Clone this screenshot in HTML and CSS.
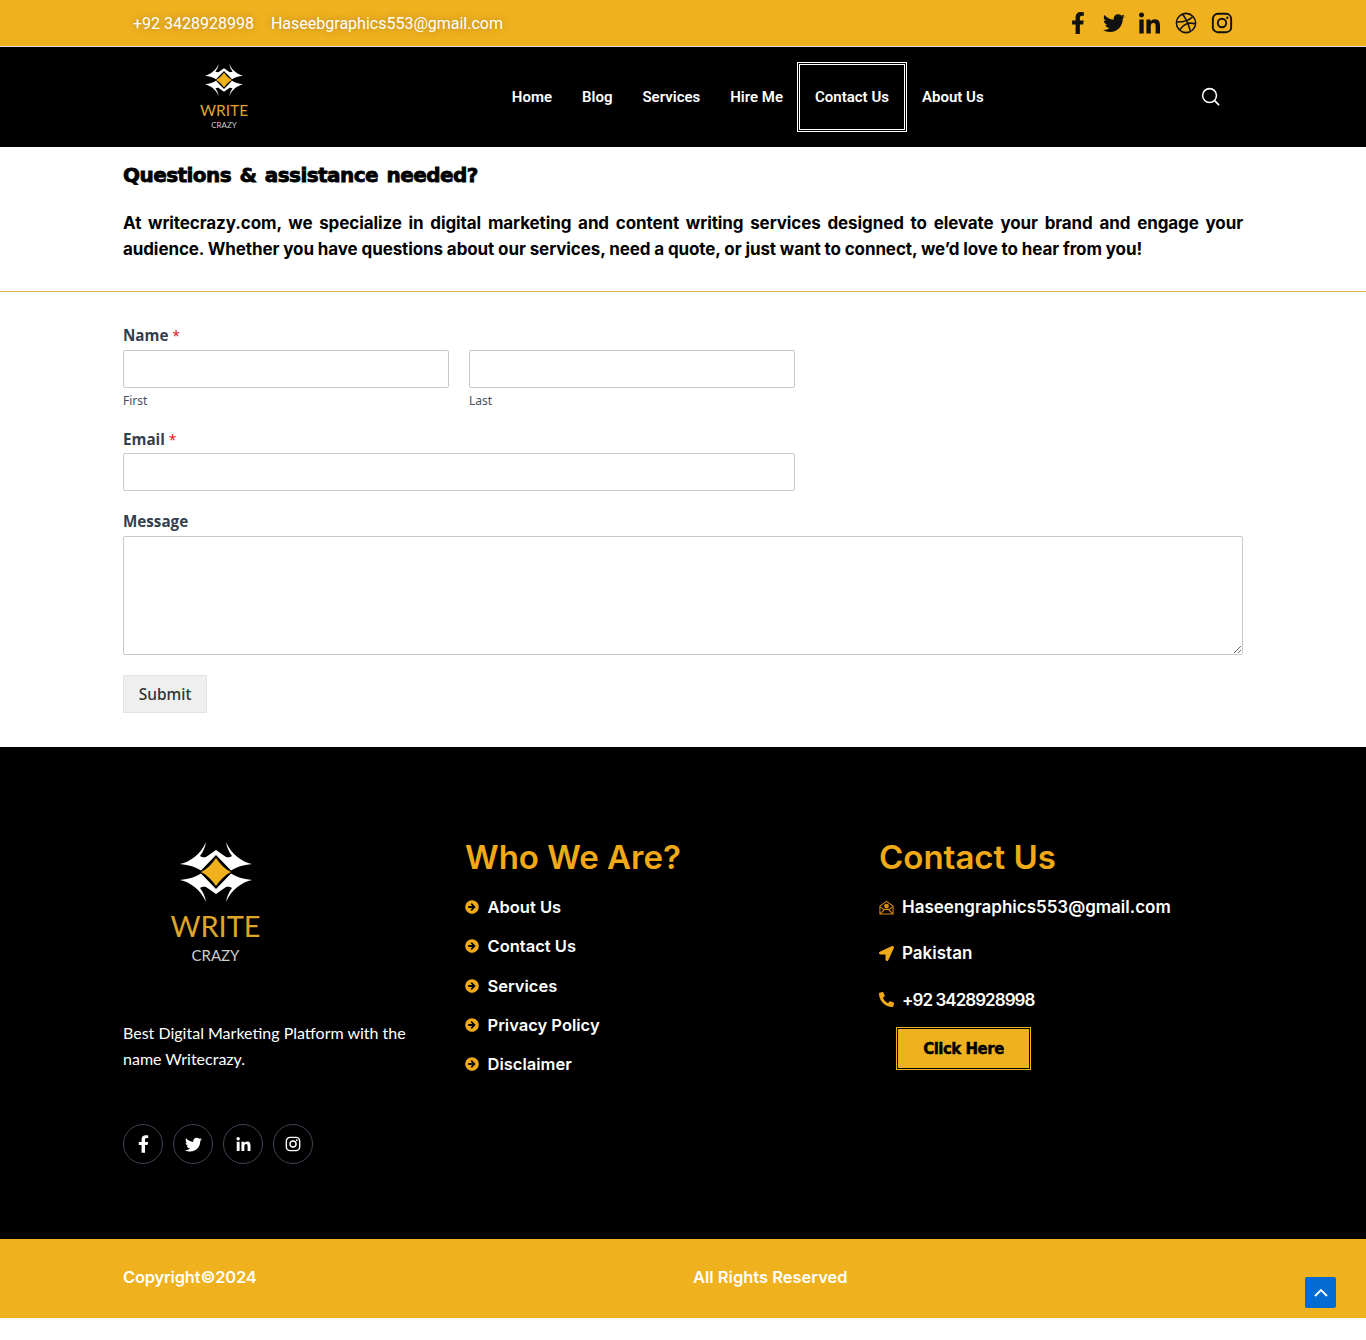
FILE: index.html
```html
<!DOCTYPE html>
<html lang="en">
<head>
<meta charset="utf-8">
<title>Contact Us – Write Crazy</title>
<link rel="stylesheet" href="styles.css">
</head>
<body>
<svg class="defs" width="0" height="0" aria-hidden="true">
  <symbol id="mark" viewBox="0 0 74 60">
    <path id="band" fill="#fff" d="M1 22C11 20 22 12 27 0C26 6 24 10 21 14C23 15.5 25 15.5 27 15L37 8L47 15C49 15.5 51 15.5 53 14C50 10 48 6 47 0C52 12 63 20 73 22C64 23 57 25 52 28.5L37 13L22 28.5C17 25 10 23 1 22Z"/>
    <g transform="translate(0 60) scale(1 -1)"><path fill="#fff" d="M1 22C11 20 22 12 27 0C26 6 24 10 21 14C23 15.5 25 15.5 27 15L37 8L47 15C49 15.5 51 15.5 53 14C50 10 48 6 47 0C52 12 63 20 73 22C64 23 57 25 52 28.5L37 13L22 28.5C17 25 10 23 1 22Z"/></g>
    <path fill="#f0b11d" d="M37 16C41 22 46 27 52 30C46 33 41 38 37 44C33 38 28 33 22 30C28 27 33 22 37 16Z"/>
  </symbol>
  <symbol id="i-f" viewBox="0 0 320 512"><path fill="currentColor" d="M279 288l14-93h-89v-60c0-25 12-50 52-50h41V6s-37-6-72-6c-73 0-121 44-121 125v70H23v93h81v224h100V288z"/></symbol>
  <symbol id="i-t" viewBox="0 0 512 512"><path fill="currentColor" d="M459 152c0 5 0 9 0 14 0 139-106 299-299 299-59 0-115-17-161-47 8 1 16 1 25 1 49 0 94-17 130-45-46-1-85-31-98-72 6 1 13 2 20 2 9 0 19-1 27-4-48-10-84-52-84-103v-1c14 8 30 13 47 13-28-19-47-51-47-87 0-20 5-37 14-53 52 64 129 105 216 110-2-8-3-16-3-24 0-58 47-105 105-105 30 0 58 13 77 33 24-5 47-14 67-26-8 25-25 45-46 58 21-2 41-8 60-16-14 21-32 39-52 53z"/></symbol>
  <symbol id="i-in" viewBox="0 0 448 512"><path fill="currentColor" d="M100 480H7V181h93zM53 140C24 140 0 116 0 87a53 53 0 0 1 107 0c0 29-24 53-54 53zm395 340h-93V334c0-35-1-79-48-79-48 0-56 38-56 77v148h-93V181h89v41h1c12-24 43-48 88-48 94 0 112 62 112 142z"/></symbol>
  <symbol id="i-ig" viewBox="0 0 24 24"><g fill="none" stroke="currentColor" stroke-width="2.1"><rect x="2" y="2" width="20" height="20" rx="5.5"/><circle cx="12" cy="12" r="4.6"/></g><circle cx="17.8" cy="6.2" r="1.3" fill="currentColor"/></symbol>
  <symbol id="i-dr" viewBox="0 0 24 24"><g fill="none" stroke="currentColor" stroke-width="1.7"><circle cx="12" cy="12" r="10.5"/><path d="M8.56 2.75c4.37 6.03 6.02 9.42 8.03 17.72m2.54-15.38c-3.72 4.35-8.94 5.66-16.88 5.85m19.5 1.9c-3.5-.93-6.63-.82-8.94 0-2.58.92-5.01 2.86-7.44 6.32"/></g></symbol>
  <symbol id="i-arrow" viewBox="0 0 512 512"><path fill="#f0a917" d="M256 8c137 0 248 111 248 248S393 504 256 504 8 393 8 256 119 8 256 8z"/><path fill="#000" d="M235 121l-23 23a15 15 0 0 0 0 21l58 55H130a15 15 0 0 0-15 15v42a15 15 0 0 0 15 15h140l-58 55a15 15 0 0 0 0 21l23 23a15 15 0 0 0 21 0l124-124a15 15 0 0 0 0-21L256 121a15 15 0 0 0-21 0z"/></symbol>
</svg>

<div class="topbar">
  <div class="topbar-info">
    <span>+92 3428928998</span>
    <span>Haseebgraphics553@gmail.com</span>
  </div>
  <div class="topbar-social">
    <svg class="ts ts-f"><use href="#i-f"/></svg>
    <svg class="ts ts-t"><use href="#i-t"/></svg>
    <svg class="ts ts-in"><use href="#i-in"/></svg>
    <svg class="ts ts-dr"><use href="#i-dr"/></svg>
    <svg class="ts ts-ig"><use href="#i-ig"/></svg>
  </div>
</div>

<header class="header">
  <div class="logo logo-small">
    <svg class="logo-mark"><use href="#mark"/></svg>
    <div class="logo-write">WRITE</div>
    <div class="logo-crazy">CRAZY</div>
  </div>
  <nav class="nav">
    <a href="#">Home</a>
    <a href="#">Blog</a>
    <a href="#">Services</a>
    <a href="#">Hire Me</a>
    <a href="#" class="current">Contact Us</a>
    <a href="#">About Us</a>
  </nav>
  <svg class="search" viewBox="0 0 20 20"><circle cx="9" cy="9" r="7.3" fill="none" stroke="currentColor" stroke-width="1.6"/><path d="M14.3 14.3L18.5 18.5" stroke="currentColor" stroke-width="1.8" stroke-linecap="round"/></svg>
</header>

<section class="intro">
  <h1>Questions &amp; assistance needed?</h1>
  <p>At writecrazy.com, we specialize in digital marketing and content writing services designed to elevate your brand and engage your audience. Whether you have questions about our services, need a quote, or just want to connect, we’d love to hear from you!</p>
</section>

<hr class="divider">

<form class="form">
  <div class="field">
    <label class="lbl">Name <em>*</em></label>
    <div class="name-row">
      <div class="name-col"><input type="text"><small>First</small></div>
      <div class="name-col"><input type="text"><small>Last</small></div>
    </div>
  </div>
  <div class="field field-email">
    <label class="lbl">Email <em>*</em></label>
    <input type="email" class="short">
  </div>
  <div class="field field-msg">
    <label class="lbl">Message</label>
    <textarea></textarea>
  </div>
  <button type="button" class="submit">Submit</button>
</form>

<footer class="footer">
  <div class="col col-about">
    <div class="logo logo-large">
      <svg class="logo-mark"><use href="#mark"/></svg>
      <div class="logo-write">WRITE</div>
      <div class="logo-crazy">CRAZY</div>
    </div>
    <p class="blurb">Best Digital Marketing Platform with the name Writecrazy.</p>
    <div class="circles">
      <a href="#"><svg class="ci-f"><use href="#i-f"/></svg></a>
      <a href="#"><svg class="ci-t"><use href="#i-t"/></svg></a>
      <a href="#"><svg class="ci-in"><use href="#i-in"/></svg></a>
      <a href="#"><svg class="ci-ig"><use href="#i-ig"/></svg></a>
    </div>
  </div>
  <div class="col col-links">
    <h2>Who We Are?</h2>
    <ul class="links">
      <li><svg><use href="#i-arrow"/></svg>About Us</li>
      <li><svg><use href="#i-arrow"/></svg>Contact Us</li>
      <li><svg><use href="#i-arrow"/></svg>Services</li>
      <li><svg><use href="#i-arrow"/></svg>Privacy Policy</li>
      <li><svg><use href="#i-arrow"/></svg>Disclaimer</li>
    </ul>
  </div>
  <div class="col col-contact">
    <h2>Contact Us</h2>
    <ul class="contacts">
      <li>
        <svg viewBox="0 0 16 16"><g fill="none" stroke="#d98a10" stroke-width="1.1"><path d="M1 6.5L8 1.5L15 6.5V15H1Z"/><path d="M1 15L6 10H10L15 15M1 7L5.5 10.5M15 7L10.5 10.5"/></g><circle cx="8" cy="6.5" r="2.6" fill="#d98a10"/></svg>
        <span>Haseengraphics553@gmail.com</span>
      </li>
      <li>
        <svg viewBox="0 0 512 512"><path fill="#f0a917" d="M444 3L28 195c-48 22-32 93 19 93h176v176c0 51 71 67 93 19L508 67c16-38-26-80-64-64z"/></svg>
        <span>Pakistan</span>
      </li>
      <li>
        <svg viewBox="0 0 512 512"><path fill="#f0a917" d="M497 361l-112-48a24 24 0 0 0-28 7l-50 60A371 371 0 0 1 130 204l60-50a24 24 0 0 0 7-28L149 14a24 24 0 0 0-27-14L18 24A24 24 0 0 0 0 48c0 256 208 464 464 464a24 24 0 0 0 23-19l24-104a24 24 0 0 0-14-28z"/></svg>
        <span class="phone">+92 3428928998</span>
      </li>
    </ul>
    <a href="#" class="cta">Click Here</a>
  </div>
</footer>

<div class="copyright">
  <span class="copy-left">Copyright©2024</span>
  <span class="copy-right">All Rights Reserved</span>
  <a href="#" class="totop"><svg viewBox="0 0 16 16"><path d="M2 11L8 5L14 11" fill="none" stroke="#fff" stroke-width="1.8"/></svg></a>
</div>
</body>
</html>
```
FILE: styles.css
```css
* { box-sizing: border-box; }
html, body { margin: 0; padding: 0; }
body { background: #fff; font-family: "Inter", sans-serif; height: 1340px; overflow: hidden; }
.defs { position: absolute; }
a { text-decoration: none; color: inherit; }

.topbar { height: 47px; background: #efb11e; border-bottom: 1px solid #ddd; display: flex; justify-content: space-between; align-items: center; padding: 0 133px; }
.topbar-info { display: flex; gap: 17px; padding-top: 2px; font: 400 16px/20px "Roboto", sans-serif; color: #fff; text-shadow: 0 0 6px rgba(120,90,40,.55); }
.topbar-social { display: flex; align-items: center; color: #111; }
.ts { display: block; height: 22px; }
.ts-f { width: 14px; margin-right: 18px; }
.ts-t { width: 22px; margin-right: 14px; }
.ts-in { width: 21px; height: 24px; margin-right: 15px; }
.ts-dr { width: 22px; margin-right: 14px; }
.ts-ig { width: 22px; }

.header { height: 100px; background: #000; display: flex; align-items: center; position: relative; padding-left: 496.8px; }
.logo { position: absolute; display: flex; flex-direction: column; align-items: center; }
.logo-small { left: 174px; top: 17px; width: 100px; }
.logo-small .logo-mark { width: 40px; height: 32px; display: block; }
.logo-write { font-family: "Lato", sans-serif; font-weight: 400; color: #dfa528; }
.logo-crazy { font-family: "Lato", sans-serif; font-weight: 400; color: #ccc; }
.logo-small .logo-write { font-size: 15.5px; line-height: 18px; margin-top: 5px; }
.logo-small .logo-crazy { font-size: 8px; line-height: 10px; margin-top: 1px; }
.nav { display: flex; align-items: center; font: 600 15px/20px "Roboto", sans-serif; color: #fff; }
.nav a { padding: 0 15px; }
.nav a.current { padding: 22px 15px; border: 3px double #fff; margin: 0 0 0 -1px; }
.search { position: absolute; left: 1201px; top: 40px; width: 19px; height: 19px; color: #fff; }

.intro { padding: 15px 123px 0; }
.intro h1 { margin: 0; font: 700 20px/26px "DejaVu Sans", sans-serif; color: #000; -webkit-text-stroke: .8px #000; letter-spacing: -.55px; word-spacing: 2px; }
.intro p { margin: 22px 0 0; font: 700 17px/26px "Inter", sans-serif; color: #000; text-align: justify; letter-spacing: -.1px; }

.divider { margin: 29px 0 0; border: 0; border-top: 1px solid #e5b648; height: 0; }

.form { padding: 33px 123px 0; height: 455px; }
.lbl { display: block; font: 700 15.2px/20px "Open Sans", sans-serif; color: #333f4d; margin-bottom: 4px; }
.lbl em { color: #d11; font-style: normal; font-weight: 400; font-size: 14px; }
input, textarea { display: block; border: 1px solid #c8c8c8; border-radius: 2px; background: #fff; width: 100%; }
input { height: 38px; }
.name-row { display: flex; gap: 20px; width: 672px; }
.name-col { flex: 1; }
.name-col small { display: block; font: 400 12px/16px "Noto Sans", sans-serif; color: #47505c; margin-top: 5px; }
.field-email { margin-top: 20px; }
.field-email .lbl { margin-bottom: 3px; }
.short { width: 672px; }
.field-msg { margin-top: 20px; }
.field-msg .lbl { margin-bottom: 5px; }
textarea { height: 119px; resize: vertical; }
.submit { display: block; margin-top: 20px; width: 84px; height: 38px; border: 1px solid #e4e4e4; background: #efefef; color: #333; font: 500 15.5px/20px "Noto Sans", sans-serif; padding: 0; }

.footer { height: 492px; background: #000; position: relative; padding: 0 0 0 123px; display: grid; grid-template-columns: 342px 414px 1fr; }
.col h2 { margin: 0; font: 600 33px/40px "Inter", sans-serif; color: #f0a917; }
.col-links, .col-contact { padding-top: 90px; }
.col-about { position: relative; padding-top: 95px; }
.logo-large { position: static; width: 185px; }
.logo-large .logo-mark { width: 74px; height: 60px; display: block; }
.logo-large .logo-write { font-size: 29px; line-height: 34px; margin-top: 7px; }
.logo-large .logo-crazy { font-size: 15px; line-height: 18px; margin-top: 3px; }
.blurb { margin: 56px 0 0; width: 300px; font: 400 16px/26px "Lato", sans-serif; color: #fff; }
.circles { display: flex; gap: 10px; margin-top: 52px; }
.circles a { width: 40px; height: 40px; border: 1px solid #3c4653; border-radius: 50%; display: flex; align-items: center; justify-content: center; color: #fff; }
.ci-f { width: 11px; height: 18px; }
.ci-t { width: 17px; height: 17px; }
.ci-in { width: 15px; height: 16px; }
.ci-ig { width: 16px; height: 16px; }

.links, .contacts { list-style: none; margin: 0; padding: 0; font: 600 17px/24px "Inter", sans-serif; color: #fff; }
.links { margin-top: 18px; font-size: 16.5px; }
.links li { display: flex; align-items: center; gap: 8.5px; height: 24px; margin-bottom: 15.3px; }
.links svg { width: 14px; height: 14px; flex: none; }
.contacts { margin-top: 18px; }
.contacts li { display: flex; align-items: center; gap: 8px; height: 24px; margin-bottom: 22.4px; }
.contacts svg { width: 15px; height: 15px; flex: none; }
.phone { letter-spacing: -.95px; }
.cta { display: flex; align-items: center; justify-content: center; width: 135px; height: 43px; margin: -7px 0 0 17px; background: #efb11e; border: 1px solid #efb11e; outline: 1px solid #000; outline-offset: -2px; font: 700 15px/20px "DejaVu Sans", sans-serif; color: #000; -webkit-text-stroke: .4px #000; letter-spacing: -.5px; }

.copyright { height: 79px; background: #efb11e; position: relative; display: flex; align-items: center; padding: 0 0 4px 123px; font: 600 16.5px/24px "Inter", sans-serif; color: #fff; }
.copy-left { width: 570px; letter-spacing: -.2px; }
.totop { position: absolute; left: 1305px; top: 38px; width: 31px; height: 31px; border-radius: 2px; background: #046bd2; display: flex; align-items: center; justify-content: center; }
.totop svg { width: 16px; height: 16px; }
```
